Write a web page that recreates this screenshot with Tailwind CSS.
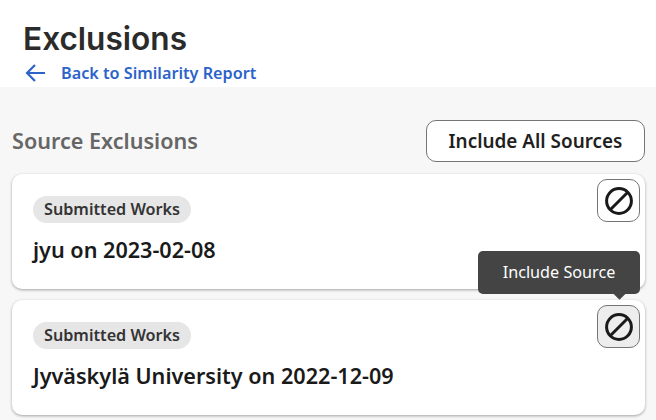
<!DOCTYPE html>
<html lang="en">
<head>
  <meta charset="UTF-8" />
  <title>Exclusions</title>
  <script src="https://cdn.jsdelivr.net/npm/@tailwindcss/browser@4"></script>
</head>
<body class="w-[656px] h-[420px] overflow-hidden bg-[#f7f7f7] font-['Noto_Sans',sans-serif]">

  <!-- Header -->
  <header class="h-[87px] bg-white pl-6 pt-[17px]">
    <h1 class="font-['Inter',sans-serif] text-[31.6px] leading-[44px] font-semibold text-[#2b2b2b] -ml-px">Exclusions</h1>
    <a class="flex items-center h-[24px] text-[16.2px] font-semibold text-[#2c63c9]">
      <svg class="w-6 h-6" viewBox="0 0 24 24" fill="none" stroke="currentColor" stroke-width="2.2"><path d="M21 12H3.5M11 4l-8 8 8 8"/></svg>
      <span class="ml-[13px]">Back to Similarity Report</span>
    </a>
  </header>

  <main class="pl-3 pr-[11px]">
    <div class="flex items-center justify-between h-[42px] mt-[33px]">
      <h2 class="text-[21.6px] font-semibold text-[#666666]">Source Exclusions</h2>
      <button class="w-[219px] h-[42px] rounded-[10px] border border-[#757575] bg-white text-[18.9px] font-semibold text-[#1f1f1f]">Include All Sources</button>
    </div>

    <!-- Cards -->
    <div class="flex flex-col gap-[11px] mt-3">
      <div class="relative h-[115px] rounded-[10px] bg-white pl-[21px] pt-[22px] shadow-[0_1px_3px_rgba(0,0,0,0.35)]">
        <span class="inline-flex items-center h-[27px] px-[11px] rounded-full bg-[#e6e6e6] text-[16.2px] font-semibold text-[#333333]">Submitted Works</span>
        <p class="mt-[9px] text-[21.6px] leading-[32px] font-semibold text-[#1a1a1a] translate-y-[2px]">jyu on 2023-02-08</p>
        <button class="absolute top-[5px] right-[5px] flex items-center justify-center w-[43px] h-[43px] rounded-[10px] border border-[#757575] bg-white">
          <svg class="w-[30px] h-[30px]" viewBox="0 0 30 30" fill="none" stroke="#1a1a1a" stroke-width="3"><circle cx="15" cy="15" r="12.4"/><path d="M23.5 6.5l-17 17"/></svg>
        </button>
      </div>

      <div class="relative h-[115px] rounded-[10px] bg-white pl-[21px] pt-[22px] shadow-[0_1px_3px_rgba(0,0,0,0.35)]">
        <span class="inline-flex items-center h-[27px] px-[11px] rounded-full bg-[#e6e6e6] text-[16.2px] font-semibold text-[#333333]">Submitted Works</span>
        <p class="mt-[9px] text-[21.6px] leading-[32px] font-semibold text-[#1a1a1a] translate-y-[2px]">Jyväskylä University on 2022-12-09</p>
        <button class="absolute top-[5px] right-[5px] flex items-center justify-center w-[43px] h-[43px] rounded-[10px] border border-[#757575] bg-[#ededed]">
          <svg class="w-[30px] h-[30px]" viewBox="0 0 30 30" fill="none" stroke="#1a1a1a" stroke-width="3"><circle cx="15" cy="15" r="12.4"/><path d="M23.5 6.5l-17 17"/></svg>
        </button>
        <!-- Tooltip -->
        <div class="absolute top-[-49px] right-[5px] flex items-center justify-center w-[162px] h-[43px] rounded-[5px] bg-[#444444] text-[16.2px] text-white">
          Include Source
          <span class="absolute top-[38px] right-[16px] w-[9px] h-[9px] rotate-45 bg-[#444444]"></span>
        </div>
      </div>
    </div>
  </main>

</body>
</html>
